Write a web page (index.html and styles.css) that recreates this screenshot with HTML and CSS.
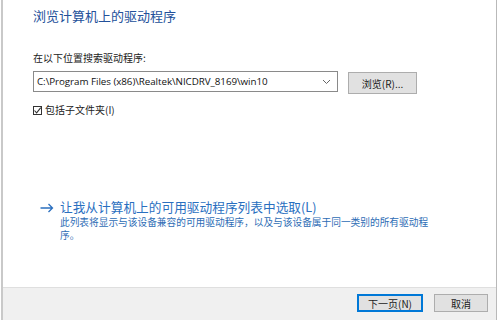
FILE: index.html
```html
<!DOCTYPE html>
<html lang="zh-CN">
<head>
  <meta charset="UTF-8">
  <meta name="viewport" content="width=device-width, initial-scale=1.0">
  <title>更新驱动程序</title>
  <link rel="stylesheet" href="styles.css">
</head>
<body>
  <div class="dialog">
    <div class="content">
      <h1 class="title">浏览计算机上的驱动程序</h1>

      <div class="search-label">在以下位置搜索驱动程序:</div>
      <div class="path-row">
        <div class="combo">
          <span class="combo-text">C:\Program Files (x86)\Realtek\NICDRV_8169\win10</span>
          <svg class="chevron" width="9" height="6" viewBox="0 0 9 6"><path d="M1 1 L4.5 4.5 L8 1" fill="none" stroke="#666" stroke-width="1"/></svg>
        </div>
        <button class="btn browse">浏览(R)...</button>
      </div>

      <label class="check">
        <span class="box"><svg width="9" height="9" viewBox="0 0 9 9"><path d="M1.5 4.5 L3.6 6.8 L7.8 1.6" fill="none" stroke="#333" stroke-width="1.1"/></svg></span>
        包括子文件夹(I)
      </label>

      <div class="pick">
        <svg class="arrow" width="14" height="10" viewBox="0 0 14 10"><path d="M0.5 5 H12.5 M8.5 1 L12.5 5 L8.5 9" fill="none" stroke="#2a6fbf" stroke-width="1.3"/></svg>
        <div class="pick-body">
          <div class="pick-title">让我从计算机上的可用驱动程序列表中选取(L)</div>
          <div class="pick-desc">此列表将显示与该设备兼容的可用驱动程序，以及与该设备属于同一类别的所有驱动程序。</div>
        </div>
      </div>
    </div>

    <div class="footer">
      <button class="btn primary">下一页(N)</button>
      <button class="btn cancel">取消</button>
    </div>
  </div>
</body>
</html>
```

FILE: styles.css
```css
body { margin: 0; background: #fff; font-family: "Segoe UI", "Open Sans", "Noto Sans CJK SC", sans-serif; color: #1a1a1a; }
.dialog { margin-left: 1px; width: 493px; height: 320px; border-left: 2px solid #c9c9c9; border-right: 1px solid #b9b9b9; display: flex; flex-direction: column; }
.content { flex: 1; padding-left: 30px; }
.title { margin: 8px 0 0; font-size: 13px; line-height: 16px; font-weight: normal; color: #23509a; font-family: "Noto Sans CJK SC", sans-serif; }
.search-label { margin-top: 27px; font-size: 10px; line-height: 14px; font-family: "Noto Sans CJK SC", sans-serif; color: #222; }
.path-row { margin-top: 6px; display: flex; align-items: flex-start; gap: 10px; }
.combo { border: 1px solid #8a8a8a; display: flex; align-items: center; justify-content: space-between; padding: 0 6px 0 3px; box-sizing: border-box; width: 305px; height: 21px; }
.combo-text { font-family: "Open Sans", sans-serif; font-size: 9.8px; color: #111; letter-spacing: -0.05px; }
.chevron { margin-top: 1px; }
.btn { font-family: "Noto Sans CJK SC", sans-serif; font-size: 10px; background: #e1e1e1; border: 1px solid #adadad; color: #1a1a1a; padding: 0; cursor: pointer; }
.browse { width: 69px; height: 22px; margin-top: 1px; }
.check { margin-top: 10px; display: flex; align-items: center; gap: 3px; font-size: 10px; font-family: "Noto Sans CJK SC", sans-serif; line-height: 12px; color: #222; }
.box { width: 9px; height: 9px; border: 1px solid #333; box-sizing: border-box; display: flex; align-items: center; justify-content: center; background: #fff; }
.box svg { width: 9px; height: 9px; flex: none; }
.pick { margin-top: 83px; display: flex; align-items: flex-start; }
.arrow { margin: 4px 0 0 7px; width: 14px; height: 10px; flex: none; margin-right: 6px; }
.pick-body { width: 380px; }
.pick-title { font-size: 12.7px; line-height: 16px; color: #2a6fbf; font-family: "Noto Sans CJK SC", sans-serif; }
.pick-desc { margin-top: 1px; font-size: 9.7px; line-height: 13px; color: #2d6cb5; font-family: "Noto Sans CJK SC", sans-serif; }
.footer { height: 33px; background: #f0f0f0; border-top: 1px solid #dfdfdf; display: flex; justify-content: flex-end; align-items: flex-start; gap: 11px; padding: 6px 8px 0 0; box-sizing: border-box; }
.primary { width: 66px; height: 18px; border: 1px solid #0078d7; box-shadow: inset 0 0 0 1px #0078d7; }
.cancel { width: 54px; height: 18px; }
```
